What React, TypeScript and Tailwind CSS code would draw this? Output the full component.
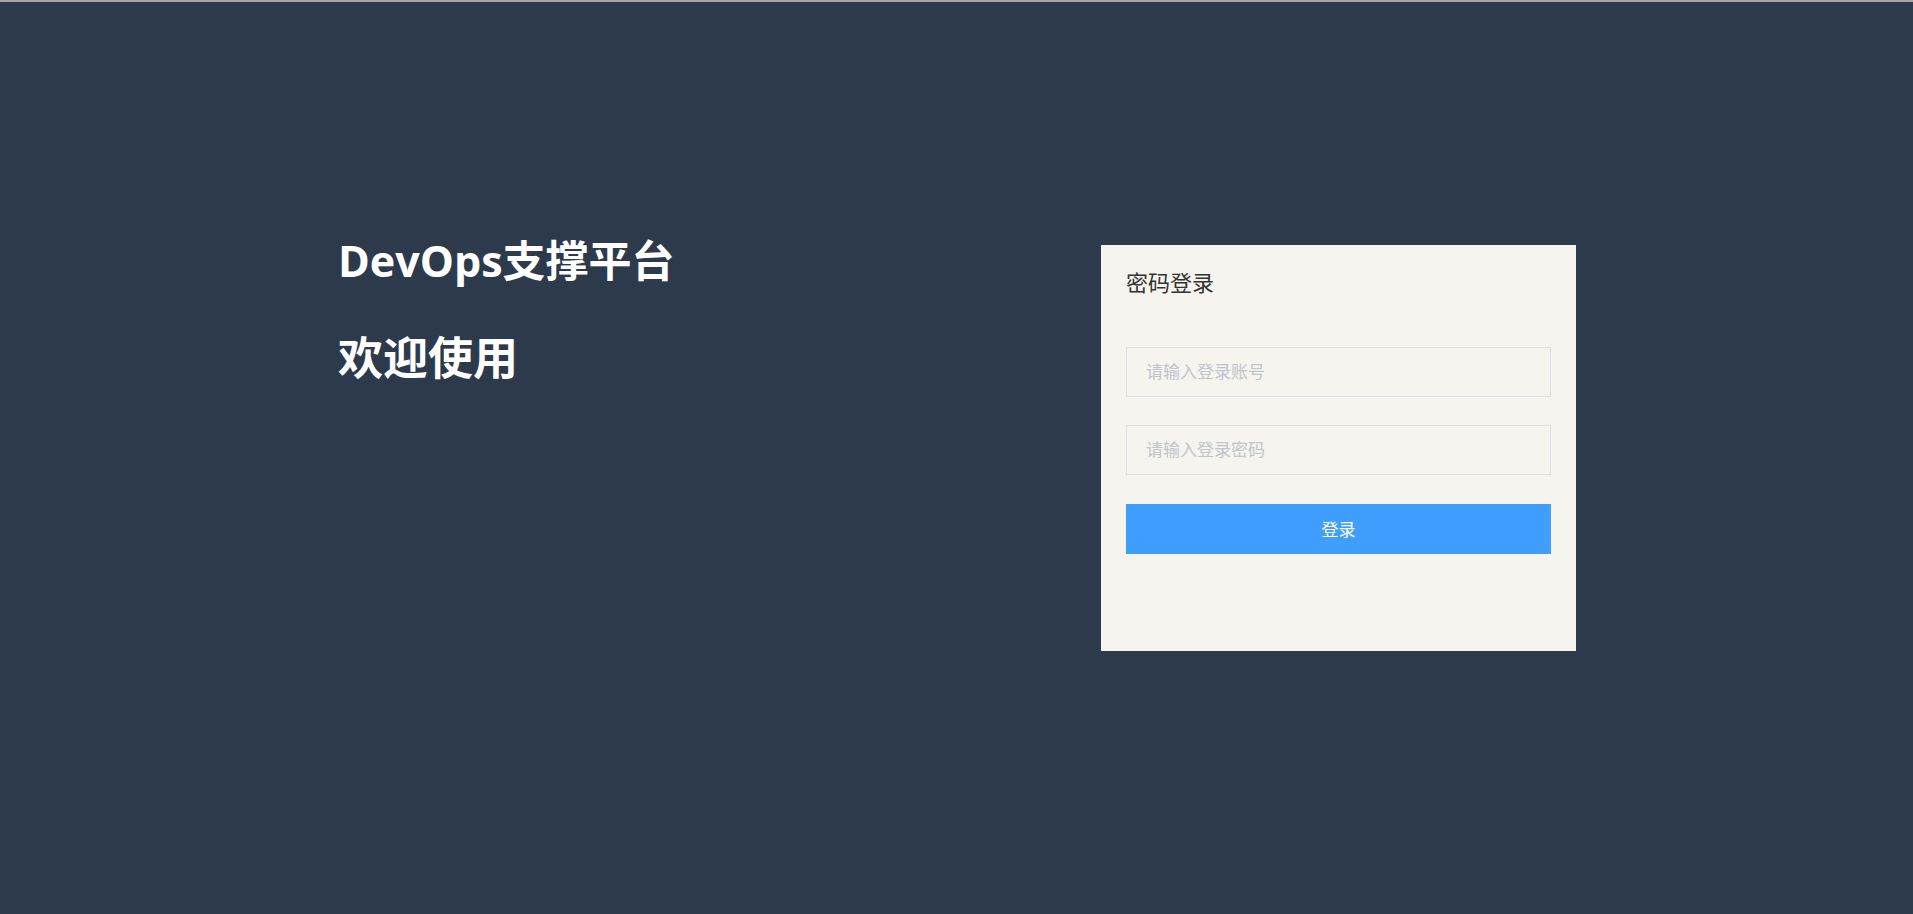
import { useState } from "react";

const font = '"Noto Sans CJK SC", "Noto Sans", sans-serif';
const titleFont = '"Open Sans", "Noto Sans CJK SC", sans-serif';

export default function App() {
  const [username, setUsername] = useState("");
  const [password, setPassword] = useState("");

  return (
    <div
      className="min-h-[914px] w-full bg-[#2d3a4b] border-t-2 border-[#a3a8a6]"
      style={{ fontFamily: font }}
    >
      <div className="ml-[341px] flex w-[1235px] justify-between pt-[243px]">
        {/* 좌측 타이틀 */}
        <div className="-ml-[3px] text-white font-bold" style={{ fontFamily: titleFont }}>
          <h1 className="text-[43px] leading-[43px] -mt-[6px]">DevOps支撑平台</h1>
          <h1 className="mt-[53px] text-[45px] leading-[45px]">欢迎使用</h1>
        </div>

        {/* 로그인 카드 */}
        <div className="w-[475px] h-[406px] bg-[#f6f4ee] px-[25px] pt-[21px]">
          <div className="text-[22px] leading-[30px] text-[#333]">密码登录</div>
          <div className="mt-[51px] flex flex-col gap-[28px]">
            <input
              value={username}
              onChange={(e) => setUsername(e.target.value)}
              placeholder="请输入登录账号"
              className="h-[50px] w-full border border-[#dcdfe6] bg-transparent px-[19px] pb-[4px] text-[17px] text-[#606266] outline-none placeholder:text-[#c0c4cc]"
            />
            <input
              type="password"
              value={password}
              onChange={(e) => setPassword(e.target.value)}
              placeholder="请输入登录密码"
              className="h-[50px] w-full border border-[#dcdfe6] bg-transparent px-[19px] pb-[4px] text-[17px] text-[#606266] outline-none placeholder:text-[#c0c4cc]"
            />
            <button
              type="button"
              className="mt-px h-[50px] w-full bg-[#409eff] text-[17px] text-white"
            >
              登录
            </button>
          </div>
        </div>
      </div>
    </div>
  );
}
